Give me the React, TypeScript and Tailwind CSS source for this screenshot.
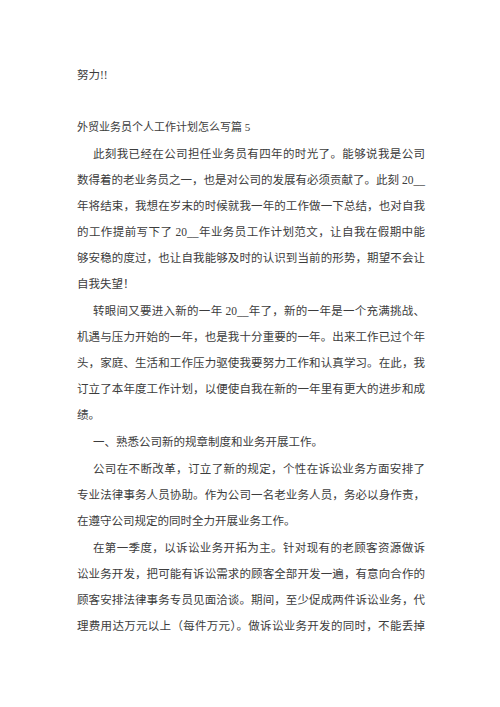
import React from "react";

type L = { t: string; j?: boolean; i?: boolean };

const paras: L[][] = [
  [
    { t: "此刻我已经在公司担任业务员有四年的时光了。能够说我是公司", j: true, i: true },
    { t: "数得着的老业务员之一，也是对公司的发展有必须贡献了。此刻 20__", j: true },
    { t: "年将结束，我想在岁末的时候就我一年的工作做一下总结，也对自我", j: true },
    { t: "的工作提前写下了 20__年业务员工作计划范文，让自我在假期中能", j: true },
    { t: "够安稳的度过，也让自我能够及时的认识到当前的形势，期望不会让", j: true },
    { t: "自我失望！" },
  ],
  [
    { t: "转眼间又要进入新的一年 20__年了，新的一年是一个充满挑战、", j: true, i: true },
    { t: "机遇与压力开始的一年，也是我十分重要的一年。出来工作已过个年", j: true },
    { t: "头，家庭、生活和工作压力驱使我要努力工作和认真学习。在此，我", j: true },
    { t: "订立了本年度工作计划，以便使自我在新的一年里有更大的进步和成", j: true },
    { t: "绩。" },
  ],
  [{ t: "一、熟悉公司新的规章制度和业务开展工作。", i: true }],
  [
    { t: "公司在不断改革，订立了新的规定，个性在诉讼业务方面安排了", j: true, i: true },
    { t: "专业法律事务人员协助。作为公司一名老业务人员，务必以身作责，", j: true },
    { t: "在遵守公司规定的同时全力开展业务工作。" },
  ],
  [
    { t: "在第一季度，以诉讼业务开拓为主。针对现有的老顾客资源做诉", j: true, i: true },
    { t: "讼业务开发，把可能有诉讼需求的顾客全部开发一遍，有意向合作的", j: true },
    { t: "顾客安排法律事务专员见面洽谈。期间，至少促成两件诉讼业务，代", j: true },
    { t: "理费用达万元以上（每件万元）。做诉讼业务开发的同时，不能丢掉", j: true },
  ],
];

function Line({ l }: { l: L }) {
  const cls =
    (l.j ? "text-justify [text-align-last:justify] " : "text-left ") +
    (l.i ? "pl-[16px]" : "");
  return <div className={cls}>{l.t}</div>;
}

export default function App() {
  return (
    <div
      className="w-[500px] h-[707px] bg-white overflow-hidden text-[#3c3c3c] text-[11.5px] leading-[26px]"
      style={{ fontFamily: '"Liberation Serif", "Noto Sans CJK SC", serif' }}
    >
      <div className="pt-[62px] pl-[77px] w-[425px]">
        <div>努力!!</div>
        <div className="h-[26px]" />
        <div className="text-[11px]">外贸业务员个人工作计划怎么写篇 5</div>
        {paras.map((p, pi) => (
          <div key={pi} className="mt-[1px]">
            {p.map((l, li) => (
              <Line key={li} l={l} />
            ))}
          </div>
        ))}
      </div>
    </div>
  );
}
